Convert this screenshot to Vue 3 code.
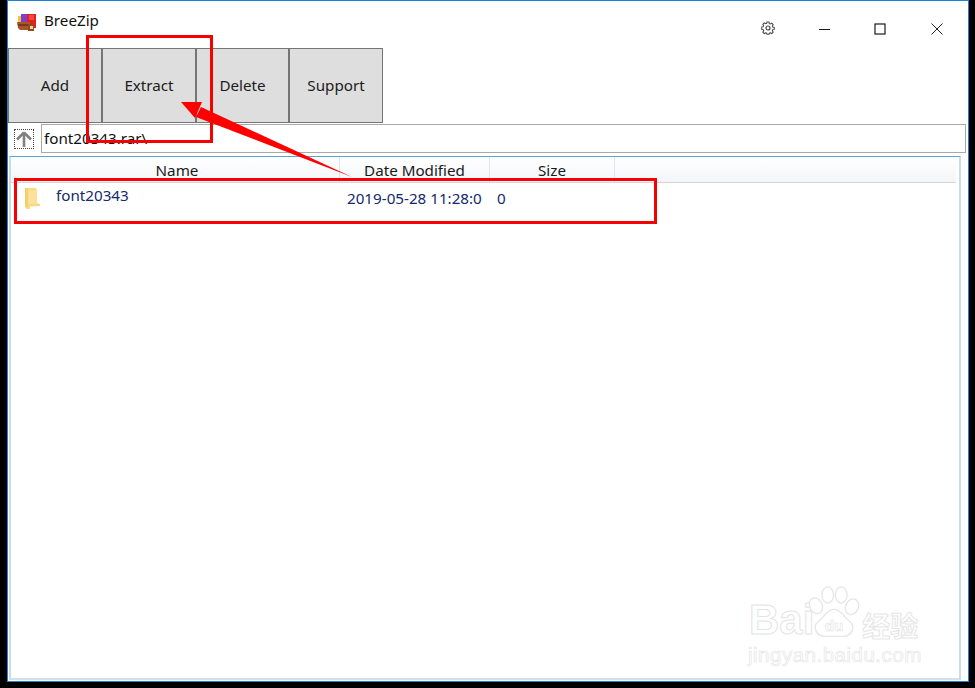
<script setup>
const buttons = ['Add', 'Extract', 'Delete', 'Support']
const columns = [
  { label: 'Name', cls: 'col-name' },
  { label: 'Date Modified', cls: 'col-date' },
  { label: 'Size', cls: 'col-size' }
]
</script>

<template>
  <div class="screen">
    <div class="window">
      <header class="titlebar">
        <svg class="app-icon" viewBox="0 0 20 20" width="20" height="20">
          <rect x="1" y="3" width="4" height="12" fill="#f2c335" />
          <rect x="4" y="1" width="7" height="13" fill="#7e3fd0" />
          <rect x="10" y="1" width="9" height="14" fill="#e2201f" />
          <rect x="12" y="2" width="5" height="5" fill="#f04a3c" />
          <path d="M0 9h13v8H3l-2-2z" fill="#a5562a" />
          <rect x="1" y="11" width="12" height="2" fill="#7a3a17" />
          <rect x="11" y="11" width="6" height="7" fill="#8e4a22" />
          <rect x="13" y="13" width="3" height="3" fill="#f3d98a" />
        </svg>
        <span class="app-title">BreeZip</span>
        <div class="controls">
          <svg class="gear" viewBox="0 0 16 16" width="16" height="16" fill="none" stroke="#444" stroke-width="1.200">
            <path d="M6.800 1.500h2.400l.4 1.800 1.200.5 1.600-1 1.700 1.700-1 1.600.5 1.200 1.800.4v2.400l-1.800.4-.5 1.200 1 1.600-1.700 1.700-1.600-1-1.200.5-.4 1.300H6.800l-.4-1.300-1.200-.5-1.600 1-1.700-1.700 1-1.600-.5-1.200-1.800-.4V7.300l1.800-.4.5-1.200-1-1.600 1.700-1.700 1.600 1 1.200-.5z" transform="translate(1.200 .8) scale(.85)" />
            <circle cx="8" cy="8" r="2" />
          </svg>
          <svg class="min" viewBox="0 0 12 12" width="12" height="12"><path d="M0 6.500h11" stroke="#1a1a1a" stroke-width="1" /></svg>
          <svg class="max" viewBox="0 0 12 12" width="12" height="12"><rect x="1" y="1" width="10" height="10" fill="none" stroke="#1a1a1a" stroke-width="1.200" /></svg>
          <svg class="close" viewBox="0 0 12 12" width="12" height="12"><path d="M.5.500l11 11M11.500.500l-11 11" stroke="#222" stroke-width="1" /></svg>
        </div>
      </header>

      <div class="toolbar">
        <button v-for="b in buttons" :key="b" class="tool">{{ b }}</button>
      </div>

      <div class="address">
        <div class="up">
          <svg viewBox="0 0 18 18" width="18" height="18">
            <path d="M9 2.500 2 9.500M9 2.500l7 7M9 3v14" fill="none" stroke="#808080" stroke-width="2.600" />
          </svg>
        </div>
        <div class="path">font20343.rar\</div>
      </div>

      <div class="list">
        <div class="head">
          <div v-for="c in columns" :key="c.label" class="hcell" :class="c.cls">{{ c.label }}</div>
        </div>
        <div class="row">
          <div class="cell-name">
            <svg class="folder" viewBox="0 0 16 22" width="16" height="22">
              <path d="M0 1h11l1 2v13l3 1v2L5 19.500V22H2L0 20z" fill="#fbd97f" />
              <path d="M0 1h3v19H0z" fill="#f6cf6c" />
              <path d="M3 3h9v14H3z" fill="#fde09a" />
            </svg>
            <span class="fname">font20343</span>
          </div>
          <div class="cell-date">2019-05-28 11:28:05</div>
          <div class="cell-size">0</div>
        </div>
      </div>
    </div>

    <div class="mark mark-extract"></div>
    <div class="mark mark-row"></div>
    <svg class="arrow" viewBox="0 0 975 688" width="975" height="688">
      <polygon points="352,177 196,117 201,107" fill="#ff0000" />
      <polygon points="181,102 202,102 195,118" fill="#ff0000" />
    </svg>

    <div class="watermark">
      <div class="wm-top">
        <span class="wm-bai">Bai</span>
        <svg class="paw" viewBox="0 0 60 60" width="54" height="58" fill="#fff" stroke="#e6e6e6" stroke-width="1.500">
          <ellipse cx="10" cy="22" rx="7" ry="9" transform="rotate(-25 10 22)" />
          <ellipse cx="23" cy="10" rx="6.500" ry="9" />
          <ellipse cx="38" cy="10" rx="6.500" ry="9" />
          <ellipse cx="50" cy="23" rx="7" ry="9" transform="rotate(25 50 23)" />
          <path d="M30 26c8 0 11 9 18 14 6 5 2 16-8 16H20C10 56 6 45 12 40c7-5 10-14 18-14z" />
          <text x="30" y="50" text-anchor="middle" class="wm-du">du</text>
        </svg>
        <span class="wm-cn">经验</span>
      </div>
      <div class="wm-url">jingyan.baidu.com</div>
    </div>
  </div>
</template>

<style>
html, body { margin: 0; background: #000; }
</style>

<style scoped>
.screen {
  position: relative;
  width: 975px;
  height: 688px;
  background: #000;
  overflow: hidden;
  font-family: "Noto Sans", "Open Sans", sans-serif;
  box-sizing: border-box;
  padding: 0 6px 6px 7px;
}
.window {
  height: 100%;
  box-sizing: border-box;
  background: #fff;
  border: 1px solid #1883d7;
  display: flex;
  flex-direction: column;
  padding-bottom: 1px;
}
.titlebar {
  height: 47px;
  flex: none;
  display: flex;
  align-items: flex-start;
  color: #111;
}
.app-icon { margin: 12px 0 0 9px; }
.app-title { font-size: 15.2px; line-height: 20px; margin: 9px 0 0 7px; }
.controls { margin-left: auto; display: flex; align-items: center; height: 16px; margin-top: 19px; margin-right: 25px; }
.gear { margin-right: 42px; margin-left: -1px; transform: translateX(-1px); }
.min { margin-right: 43px; margin-top: 2px; }
.max { margin-right: 45px; margin-top: 2px; }
.close { margin-top: 2px; }
.toolbar { display: flex; height: 75px; flex: none; }
.tool {
  width: 94px;
  height: 75px;
  box-sizing: border-box;
  border: 1px solid #757575;
  background: #dedede;
  color: #1c1c1c;
  font: 15.2px "Noto Sans", "Open Sans", sans-serif;
  padding: 0 0 2px;
  margin: 0;
}
.tool:nth-child(3) { width: 93px; }
.address {
  height: 29px;
  margin-top: 1px;
  flex: none;
  display: flex;
  align-items: center;
  padding-right: 2px;
}
.up {
  width: 20px;
  height: 20px;
  margin-left: 6px;
  box-sizing: border-box;
  border: 1px dotted #444;
  display: flex;
  align-items: center;
  justify-content: center;
}
.path {
  flex: 1;
  height: 29px;
  box-sizing: border-box;
  margin-left: 7px;
  border: 1px solid #a9a9a9;
  font-size: 15.2px;
  line-height: 27px;
  padding-left: 2px;
  color: #111;
}
.list {
  flex: 1;
  margin: 3px 7px 0 1px;
  border-style: solid;
  border-color: #5aa5d8 #c5dcec #d8dfe4 #c5dcec;
  border-width: 1px 2px 2px;
  min-height: 0;
}
.head {
  height: 25px;
  display: flex;
  background: linear-gradient(#ffffff, #f3f5f8);
  border-bottom: 1px solid #d5d5d5;
  margin-right: 3px;
  font-size: 15.2px;
  color: #1a1a1a;
}
.hcell {
  box-sizing: border-box;
  text-align: center;
  line-height: 26px;
  height: 25px;
  border-right: 1px solid #e3e5e8;
  white-space: nowrap;
}
.col-name { width: 329px; padding-left: 4px; }
.col-date { width: 150px; }
.col-size { width: 125px; }
.row {
  display: flex;
  color: #14296e;
  font-size: 15.2px;
}
.cell-name { width: 329px; display: flex; flex: none; }
.folder { margin: 4px 0 0 14px; }
.fname { margin: 2px 0 0 15px; line-height: 20px; }
.cell-date {
  width: 135px;
  margin: 5px 0 0 7px;
  line-height: 20px;
  overflow: hidden;
  white-space: nowrap;
  flex: none;
}
.cell-size { margin: 5px 0 0 15px; line-height: 20px; }

.mark { position: absolute; border: 3px solid #f70000; box-sizing: border-box; }
.mark-extract { left: 86px; top: 35px; width: 127px; height: 108px; }
.mark-row { left: 14px; top: 178px; width: 643px; height: 46px; }
.arrow { position: absolute; left: 0; top: 0; pointer-events: none; }

.watermark { position: absolute; left: 749px; top: 583px; width: 180px; color: transparent; }
.wm-top { display: flex; align-items: flex-end; height: 58px; }
.wm-bai {
  font: bold 42px/40px "Liberation Sans", sans-serif;
  -webkit-text-stroke: 1px #e4e4e4;
  margin-bottom: 1px;
}
.paw { margin-left: -7px; margin-bottom: -1px; flex: none; }
.wm-du { font: bold 17px "Liberation Sans", sans-serif; fill: #fff; stroke: #e4e4e4; stroke-width: .7px; }
.wm-cn {
  font: bold 28px/30px "Noto Sans CJK SC", sans-serif;
  -webkit-text-stroke: 1px #e6e6e6;
  margin: 0 0 1px 1px;
  white-space: nowrap;
}
.wm-url {
  font: 20.500px/22px "Liberation Sans", sans-serif;
  -webkit-text-stroke: .7px #e6e6e6;
  white-space: nowrap;
  margin-top: 3px;
  margin-left: -1px;
  letter-spacing: .5px;
}
</style>
